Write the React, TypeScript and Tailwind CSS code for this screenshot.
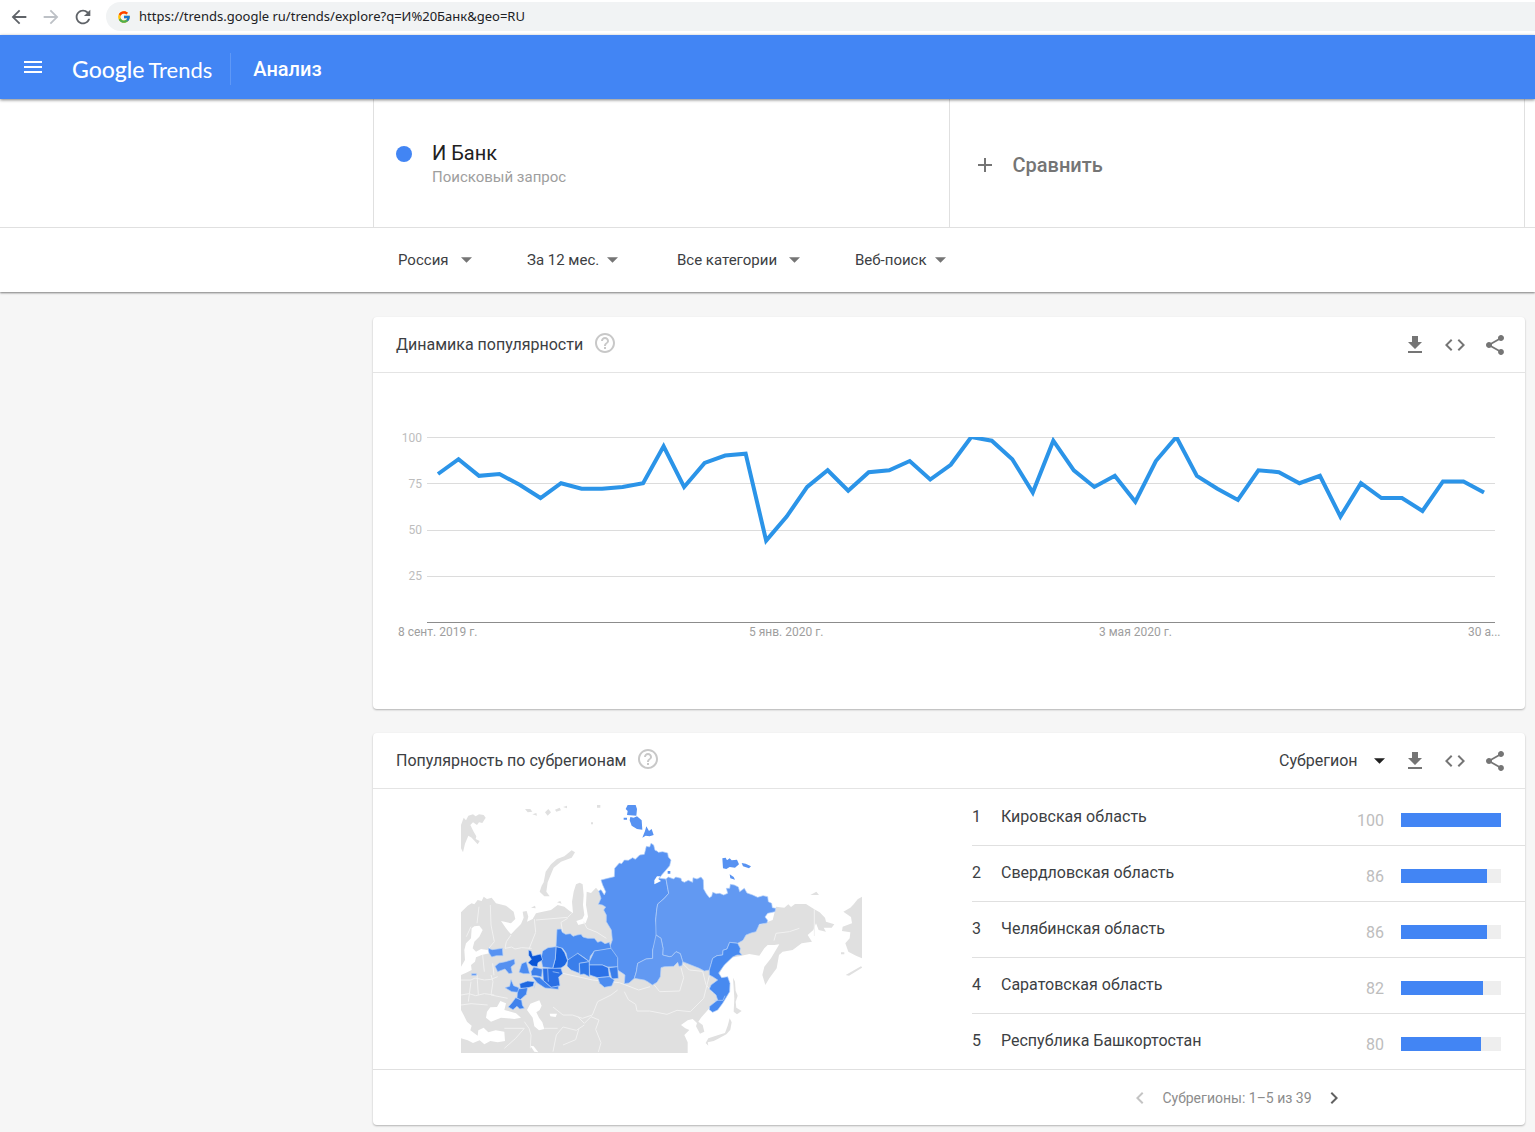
import { ReactNode } from "react";
import { FcGoogle } from "react-icons/fc";
import {
  MdAdd,
  MdArrowBack,
  MdArrowForward,
  MdChevronLeft,
  MdChevronRight,
  MdCode,
  MdFileDownload,
  MdHelpOutline,
  MdMenu,
  MdRefresh,
  MdShare,
} from "react-icons/md";

const values = [
  80, 88, 79, 80, 74, 67, 75, 72, 72, 73, 75, 95, 73, 86, 90, 91, 44, 57, 73,
  82, 71, 81, 82, 87, 77, 85, 100, 98, 88, 70, 98, 82, 73, 79, 65, 87, 100, 79,
  72, 66, 82, 81, 75, 79, 57, 75, 67, 67, 60, 76, 76, 70,
];

const filters = [
  { label: "Регион", value: "Россия", box: "w-[129px]", field: "w-[63px]" },
  { label: "Период", value: "За 12 мес.", box: "w-[150px]", field: "w-[80px]" },
  {
    label: "Категория",
    value: "Все категории",
    box: "w-[178px]",
    field: "w-[112px]",
  },
  { label: "Тип поиска", value: "Веб-поиск", box: "", field: "w-[80px]" },
];

const regions = [
  { name: "Кировская область", value: 100 },
  { name: "Свердловская область", value: 86 },
  { name: "Челябинская область", value: 86 },
  { name: "Саратовская область", value: 82 },
  { name: "Республика Башкортостан", value: 80 },
];

const Caret = ({ className }: { className: string }) => (
  <svg
    viewBox="0 0 10 5"
    className={`pointer-events-none h-[6px] w-[11px] shrink-0 ${className}`}
    fill="currentColor"
    aria-hidden
  >
    <path d="M0 0h10L5 5z" />
  </svg>
);

const BrowserBar = () => (
  <div className="flex h-[35px] items-start bg-white pt-[2px] text-[#5f6368]">
    <div className="flex h-[29px] items-center gap-[10px] pl-2">
      <button aria-label="Назад">
        <MdArrowBack size={22} />
      </button>
      <button aria-label="Вперёд" className="text-[#bdc1c6]">
        <MdArrowForward size={22} />
      </button>
      <button aria-label="Обновить">
        <MdRefresh size={22} />
      </button>
    </div>
    <div className="ml-3 flex h-[29px] flex-1 items-center gap-2 rounded-l-full bg-[#f1f3f4] pl-[11px]">
      <FcGoogle size={14} />
      <input
        aria-label="Адрес"
        className="flex-1 bg-transparent font-['Noto_Sans','Open_Sans',sans-serif] text-[13px] text-[#202124] outline-none"
        defaultValue="https://trends.google ru/trends/explore?q=И%20Банк&geo=RU"
      />
    </div>
  </div>
);

const Header = () => (
  <header className="relative flex h-16 items-center bg-[#4285f4] text-white shadow-[0_1px_3px_rgba(0,0,0,0.5)]">
    <button aria-label="Меню" className="ml-[21px]">
      <MdMenu size={24} />
    </button>
    <div className="flex items-center pt-1">
      <a
        href="#"
        className="ml-[27px] flex items-baseline gap-1 font-['Lato',sans-serif]"
      >
        <span className="text-[23px] font-medium">Google</span>
        <span className="text-[22px]">Trends</span>
      </a>
      <div className="ml-[18px] h-8 w-px bg-[#5f98f6]" />
      <h1 className="ml-[22px] text-xl font-medium">Анализ</h1>
    </div>
  </header>
);

const CardActions = () => (
  <div className="flex gap-4 text-[#757575]">
    <button aria-label="Скачать">
      <MdFileDownload size={24} />
    </button>
    <button aria-label="Встроить">
      <MdCode size={24} />
    </button>
    <button aria-label="Поделиться">
      <MdShare size={24} />
    </button>
  </div>
);

type CardProps = {
  title: string;
  controls?: ReactNode;
  children: ReactNode;
};

const Card = ({ title, controls, children }: CardProps) => (
  <section className="rounded-sm bg-white shadow-[0_1px_2px_rgba(0,0,0,0.28)]">
    <div className="flex h-14 items-center border-b border-[#e4e4e4] pr-[18px] pl-[23px]">
      <h2 className="text-base text-[#3c4043]">{title}</h2>
      <button aria-label="Справка" className="mb-[3px] ml-[10px] text-[#c8c8c8]">
        <MdHelpOutline size={24} />
      </button>
      <div className="ml-auto flex items-center">
        {controls}
        <CardActions />
      </div>
    </div>
    {children}
  </section>
);

const TrendChart = () => {
  const step = 1046 / (values.length - 1);
  const points = values
    .map((v, i) => `${65 + i * step},${249 - v * 1.85}`)
    .join(" ");

  return (
    <svg
      viewBox="0 0 1152 336"
      className="block w-full text-[12px]"
      role="img"
      aria-label="Динамика популярности"
    >
      {[100, 75, 50, 25].map((tick) => (
        <g key={tick}>
          <path
            d={`M54 ${Math.round(249 - tick * 1.85) + 0.5}h1068`}
            stroke="#dcdcdc"
          />
          <text
            x="49"
            y={Math.floor(249 - tick * 1.85) + 5}
            textAnchor="end"
            fill="#bdbdbd"
          >
            {tick}
          </text>
        </g>
      ))}
      <path d="M54 249.5h1068" stroke="#8c8c8c" />
      <clipPath id="plot">
        <path d="M54 64h1068v186H54z" />
      </clipPath>
      <polyline
        points={points}
        clipPath="url(#plot)"
        fill="none"
        stroke="#2b94e8"
        strokeWidth="4"
      />
      <g fill="#9e9e9e">
        <text x="25" y="263">
          8 сент. 2019 г.
        </text>
        <text x="376" y="263">
          5 янв. 2020 г.
        </text>
        <text x="726" y="263">
          3 мая 2020 г.
        </text>
        <text x="1095" y="263">
          30 а...
        </text>
      </g>
    </svg>
  );
};

const RegionMap = () => (
  <svg
    viewBox="30 15 1203 759"
    className="w-[401px] max-w-full"
    strokeLinejoin="round"
    role="img"
    aria-label="Карта субрегионов"
  >
    {/* land without data */}
    <g fill="#e0e0e0">
      <path d="M30 352L50 332 62 325 70 328 80 315 92 318 98 305 108 312 122 308 135 325 165 332 188 350 193 372 180 385 150 378 165 400 180 418 195 402 210 387 218 368 215 350 227 348 232 365 228 380 245 372 255 355 275 350 300 345 320 330 340 335 352 345 366 355 363 320 368 290 375 268 386 263 395 268 398 300 396 330 400 360 394 372 376 378 382 390 404 384 411 365 405 330 407 290 420 294 435 278 445 290 460 300 500 400 900 400 965 375 975 335 1000 338 1012 328 1020 336 1032 327 1065 327 1090 343 1106 352 1122 368 1125 380 1150 388 1142 398 1118 398 1125 410 1103 405 1095 385 1087 405 1070 420 1083 440 1052 445 1025 465 995 470 984 480 977 520 955 550 943 570 934 540 940 515 960 490 985 448 970 450 950 450 940 460 925 482 895 477 865 484 830 490 800 545 800 620 775 640 750 668 742 680 755 690 760 710 747 716 735 694 738 684 725 672 710 676 690 690 703 700 715 705 700 720 710 742 710 774H30z" />
      <path d="M30 90L38 68 45 76 52 62 66 58 74 64 84 58 98 60 104 68 94 84 84 82 78 90 66 82 58 90 68 110 76 124 74 132 86 138 80 148 62 128 52 122 42 146 36 172 30 160z" />
      <path d="M266 290L272 272 278 262 284 230 300 208 318 192 340 184 362 166 372 172 362 188 330 200 308 218 298 242 290 262 286 290 296 304 280 304z" />
      <path d="M222 42h16l6 8-14 2zM244 58l12-4 2 8zM282 52l10-10 8 10-10 10zM312 44l14-6 4 8-14 4zM336 36l12-4v8zM438 30h10v8h-10zM420 82h6v6h-6zM240 338l12-6 2 8zM318 322l10-4 4 8z" />
      <path d="M1233 305L1220 313 1208 328 1198 338 1177 350 1200 366 1203 385 1175 395 1173 408 1198 412 1196 430 1183 445 1192 470 1215 482 1233 490z" />
      <path d="M1078 300l18-10 8 10zM1184 540l46-26 4 4-40 24zM1170 472h10v6h-10z" />
      <path d="M846 548l6 12 2 28 6 14-6 18 2 18 16 10-14 10-10-8 2-40zM836 670l6 12-4 22-12 14-26 14-12 6-18 4 2 10-8-8 8-14 30-10 20-6 8-22z" />
    </g>
    {/* seas */}
    <g fill="#fff">
      <path d="M62 400L70 394 85 392 95 405 85 425 70 440 65 460 75 470 90 462 110 465 115 475 92 480 75 487 72 500 60 510 62 525 44 534 30 540 30 515 42 495 40 465 45 445 60 430z" />
      <path d="M108 650L118 637 138 636 148 618 165 625 160 645 195 655 210 668 190 672 150 668 120 680 105 668z" />
      <path d="M228 645L238 626 265 616 272 632 266 645 256 652 264 668 274 682 280 702 264 706 250 694 245 668z" />
      <path d="M30 645L38 660 48 680 62 692 58 706 80 722 82 706 98 698 112 712 134 706 160 710 162 738 140 742 118 738 100 748 86 736 66 744 50 736 30 730z" />
      <path d="M238 752l10 2 14 18-12-2zM296 656h22l-4 10-16-2z" />
    </g>
    {/* borders of neighbouring countries */}
    <g fill="none" stroke="#f1f1f1" strokeWidth="3">
      <path d="M118 330l2 60 10 50-20 24M84 335l-6 50M60 395l-14 30M180 420l-14 20-4 20 20-4 10 6 20-4 30 2M250 372l4 40-20 50M255 375l95-8 12-12M350 370l-20 12 10 60M398 380l10 20 30 12 28 18M30 555h30l12-6 28 6 20-2 20-8M78 540l4 60M120 540l6 20-6 40 50 10M95 480l5 50M125 505l4 36M30 600l24-4 20 6 26-6 30 4M30 630l30-4 50 4M60 560l-8 60" />
      <path d="M335 535l90 20 80 8 32 12 26 10 34-10M480 600l-40 20-16 40-30 10-30-10-28 0-30-24M500 585l-20 15M520 590l12 24 22 14 4 20 38 0 52 10 30-12 40 4 40-40 20-80M610 570l16 20 60-2 12-40-8-30M695 505l20 20 40 4 10 40 20 24M380 665l20 20 20-20 24 10-10 28 16 40-8 28M400 690l-24 16-40-10-20 24-10 50M220 680l14 20 6 20-2 40M160 700l60 0M220 700l-26 30-34 30M280 700l40 0M384 700l-10 34-38 16M1090 343v80M1045 400l-30 10-40 5-6 22" />
    </g>
    <g stroke="#b4d0f9" strokeWidth="2">
      <path
        fill="#5792f2"
        d="M450 255L470 250 490 245 491 220 505 204 512 206 520 195 532 196 545 188 553 193 566 180 580 178 586 154 596 156 600 145 608 150 612 166 618 168 622 172 635 170 650 174 652 186 660 195 656 212 645 225 632 240 625 250 645 252 653 295 640 310 620 327 617 345 614 375 620 420 605 465 605 490 585 492 560 505 556 530 550 550 534 564 520 566 522 540 515 535 500 525 498 490 475 460 484 435 481 405 466 380 466 360 458 345 464 336 454 330 442 328 450 310 443 288 450 284 460 300 464 290 455 270z"
      />
      <path fill="#fff" stroke="none" d="M610 256l8-12 10 0-6 8 8 6-12 6-8 4z" />
      <path
        fill="#6299f2"
        d="M645 252L652 246 668 252 674 246 690 250 692 258 700 262 712 256 725 262 726 248 738 252 750 246 757 255 758 282 766 296 775 308 782 304 785 292 796 296 806 295 818 300 830 295 826 280 836 280 838 268 850 270 862 276 866 290 880 280 888 294 905 300 920 307 936 302 950 305 952 320 962 325 964 338 974 340 972 350 950 355 942 366 950 376 948 384 925 388 915 410 900 414 885 420 876 436 860 445 836 442 828 462 816 466 815 480 798 482 785 490 780 508 775 525 760 528 745 520 720 510 695 500 688 476 675 470 662 484 655 485 635 480 636 460 630 430 615 420 614 375 617 345 620 327 640 310 653 295z"
      />
      <path
        fill="#6299f2"
        d="M615 420L630 430 636 460 635 480 655 485 662 484 675 470 688 476 695 500 693 512 684 514 680 502 668 514 640 515 630 518 628 545 618 562 604 570 590 560 580 555 550 550 556 530 560 505 585 492 605 490 605 465z"
      />
      <path
        fill="#488af0"
        d="M860 445L868 460 866 472 873 480 858 480 845 486 820 510 803 534 812 548 830 545 837 565 836 590 815 625 800 645 785 652 775 644 776 634 800 615 795 600 775 582 780 570 800 555 785 545 775 540 775 525 780 508 785 490 798 482 815 480 816 466 828 462 836 442z"
      />
      <path fill="none" d="M790 616l26 0 6-14" />
      <path
        fill="#4c8cf0"
        d="M318 403L330 402 334 412 344 418 358 416 366 424 378 420 390 418 396 426 410 430 430 430 440 442 450 438 462 446 475 442 480 460 450 466 430 468 418 484 415 500 400 488 380 475 366 488 350 495 345 474 335 460 315 455z"
      />
      <path fill="#1c66e0" d="M315 455l16 4 10 14 9 24-8 14-12 8-25 2 8-30z" />
      <path fill="#4888ee" d="M275 468l16-10 24-3-2 35-8 30-30-4-5-26z" />
      <path
        fill="#0b56d6"
        d="M233 465l8 4 4 14 24-6 6 18-14 8-2 12-16-2-12-10 10-10-8-12z"
      />
      <path fill="#3a7eea" d="M350 495l30-20 35 25-30 5v30l-25-10-12-12z" />
      <path fill="#2f77e8" d="M385 505l30-5v45l-16-8-12 2z" />
      <path fill="#4c8cf0" d="M415 500l15-32 50-8 20 28v28l-30 0-16-6-39 0z" />
      <path fill="#2c72e8" d="M415 510l39 0 18 8 3 27-35 3-24-8z" />
      <path fill="#3a7eea" d="M474 518l26-3 2 35-20 2z" />
      <path fill="#4c8cf0" d="M440 548l35-3 15 10-8 18-22 4-14-12z" />
      <path fill="#2a6fe4" d="M275 520l55 0 5 16-12 10 4 26-26 6-24-22z" />
      <path fill="#3d80ea" d="M240 530l8-14 26 6-2 24-16-4-14 0z" />
      <path fill="#3f82ec" d="M244 545l22 2 34 30 22-4v10l-40-4-24-16z" />
      <path fill="#4b8bf0" d="M204 532l8-26 14-6 4 14 6 22-18 0z" />
      <path fill="#1f68e0" d="M206 566l24-8 20 2-4 14-22 6-16 0z" />
      <path fill="#3f82ec" d="M200 582l30-4-4 20-18 16-10-4z" />
      <path fill="#4b8bf0" d="M162 578l14-4 4-20 8 18 16 6-4 14-18-2z" />
      <path
        fill="#3f82ec"
        d="M184 622l10-14 18 8 2 14 6 10-14 2-8-8-12 10-14-8z"
      />
      <path
        fill="#5590f0"
        d="M132 514l12-10 20-4 26-8 2 14-12 10 4 18-10 2-12-14-22 8z"
      />
      <path fill="#5792f2" d="M112 460l12 4 30-4 2 22-20 0-14 4-8-12z" />
      <path fill="#5792f2" d="M62 536h14v5H62z" />
      <path fill="none" d="M290 520l2 40M305 530l20 4M255 560l-6 20" />
    </g>
    {/* arctic islands */}
    <g fill="#5792f2">
      <path d="M530 30h24l4 12-2 20-28-2 2-12-6-6zM538 66l10 2 10-4 14 12 2 28-16-2-16-10-6-16zM518 68h10v6h-10zM574 128l8-20 4-14 8 14 8-6 6 18-12 4-12-2z" />
      <path d="M814 190l10-2 4 8 8-6 6 6 16-2 6 14-12 10-16-2-10 6-10-2zM872 204l12 2 16 8-6 6-18-6zM836 238l12 8 4 8-14-4zM650 228h8v8h-8z" />
    </g>
  </svg>
);

const RegionTable = () => (
  <table className="w-full text-base text-[#3c4043]">
    <tbody>
      {regions.map(({ name, value }, i) => (
        <tr
          key={name}
          className="h-14 border-b border-[#e0e0e0] last:border-b-0"
        >
          <td className="w-[29px]">{i + 1}</td>
          <td>{name}</td>
          <td className="w-12 pt-2 pr-[17px] text-right text-[#bdbdbd]">
            {value}
          </td>
          <td className="w-[124px] pt-[6px] pr-6">
            <div className="h-[14px] bg-[#eeeeee]">
              <div
                className="h-full bg-[#4285f4]"
                style={{ width: `${value}%` }}
              />
            </div>
          </td>
        </tr>
      ))}
    </tbody>
  </table>
);

export default function App() {
  return (
    <div className="min-h-screen bg-[#f6f6f6] pb-[7px] font-['Roboto','Liberation_Sans',sans-serif]">
      <BrowserBar />
      <Header />
      <div className="bg-white shadow-[0_1px_2px_rgba(0,0,0,0.5)]">
        <div className="border-b border-[#e0e0e0] pr-[10px] pl-[373px]">
          <div className="grid h-32 grid-cols-2 border-r border-[#e0e0e0]">
            <div className="flex border-l border-[#e0e0e0] pt-[42px] pl-[22px]">
              <span className="mt-[5px] h-4 w-4 rounded-full bg-[#4285f4]" />
              <div className="ml-5">
                <p className="text-xl leading-6 text-[#212121]">И Банк</p>
                <p className="text-[15px] leading-6 text-[#9e9e9e]">
                  Поисковый запрос
                </p>
              </div>
            </div>
            <button className="flex items-center gap-4 border-l border-[#e0e0e0] pt-1 pl-[23px] text-xl font-medium text-[#757575]">
              <MdAdd size={24} />
              Сравнить
            </button>
          </div>
        </div>
        <div className="flex h-16 items-center pl-[398px] text-[15px] text-[#3c4043]">
          {filters.map(({ label, value, box, field }) => (
            <label key={label} className={`flex items-center ${box}`}>
              <select
                aria-label={label}
                className={`appearance-none outline-none ${field}`}
              >
                <option>{value}</option>
              </select>
              <Caret className="text-[#757575]" />
            </label>
          ))}
        </div>
      </div>

      <main className="mt-[25px] mr-[10px] ml-[373px] flex flex-col gap-6">
        <Card title="Динамика популярности">
          <TrendChart />
        </Card>
        <Card
          title="Популярность по субрегионам"
          controls={
            <label className="mr-[18px] flex items-center">
              <select
                aria-label="Уровень"
                className="w-[95px] appearance-none text-base text-[#3c4043] outline-none"
              >
                <option>Субрегион</option>
              </select>
              <Caret className="text-[#212121]" />
            </label>
          }
        >
          <div className="grid grid-cols-2">
            <div className="flex items-center justify-center pb-[6px]">
              <RegionMap />
            </div>
            <div className="pl-[23px]">
              <RegionTable />
            </div>
          </div>
          <div className="grid h-14 grid-cols-2 border-t border-[#e0e0e0]">
            <div className="col-start-2 flex items-center justify-center gap-[10px] text-sm text-[#8c8c8c]">
              <button aria-label="Предыдущие" className="text-[#c4c4c4]">
                <MdChevronLeft size={24} />
              </button>
              <span>Субрегионы: 1–5 из 39</span>
              <button aria-label="Следующие" className="text-[#616161]">
                <MdChevronRight size={24} />
              </button>
            </div>
          </div>
        </Card>
      </main>
    </div>
  );
}
